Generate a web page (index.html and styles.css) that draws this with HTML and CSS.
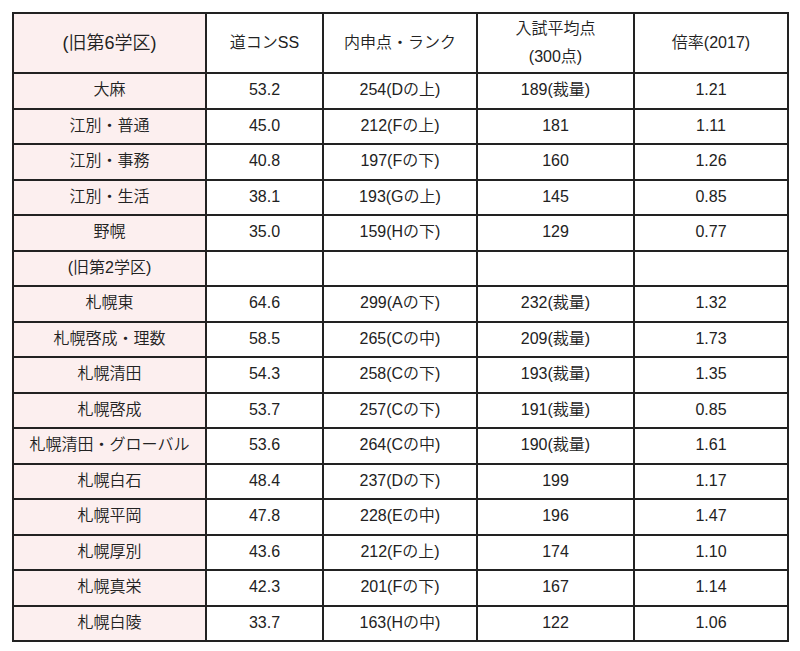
FILE: index.html
```html
<!DOCTYPE html>
<html lang="ja">
<head>
<meta charset="utf-8">
<link rel="stylesheet" href="styles.css">
</head>
<body>
<table class="score-table">
  <colgroup>
    <col class="c-name"><col class="c-ss"><col class="c-rank"><col class="c-avg"><col class="c-rate">
  </colgroup>
  <thead>
    <tr>
      <th class="name head-name">(旧第6学区)</th>
      <th>道コンSS</th>
      <th>内申点・ランク</th>
      <th class="two">入試平均点<br>(300点)</th>
      <th>倍率(2017)</th>
    </tr>
  </thead>
  <tbody>
    <tr><td class="name">大麻</td><td>53.2</td><td>254(Dの上)</td><td>189(裁量)</td><td>1.21</td></tr>
    <tr><td class="name">江別・普通</td><td>45.0</td><td>212(Fの上)</td><td>181</td><td>1.11</td></tr>
    <tr><td class="name">江別・事務</td><td>40.8</td><td>197(Fの下)</td><td>160</td><td>1.26</td></tr>
    <tr><td class="name">江別・生活</td><td>38.1</td><td>193(Gの上)</td><td>145</td><td>0.85</td></tr>
    <tr><td class="name">野幌</td><td>35.0</td><td>159(Hの下)</td><td>129</td><td>0.77</td></tr>
    <tr><td class="name">(旧第2学区)</td><td></td><td></td><td></td><td></td></tr>
    <tr><td class="name">札幌東</td><td>64.6</td><td>299(Aの下)</td><td>232(裁量)</td><td>1.32</td></tr>
    <tr><td class="name">札幌啓成・理数</td><td>58.5</td><td>265(Cの中)</td><td>209(裁量)</td><td>1.73</td></tr>
    <tr><td class="name">札幌清田</td><td>54.3</td><td>258(Cの下)</td><td>193(裁量)</td><td>1.35</td></tr>
    <tr><td class="name">札幌啓成</td><td>53.7</td><td>257(Cの下)</td><td>191(裁量)</td><td>0.85</td></tr>
    <tr><td class="name">札幌清田・グローバル</td><td>53.6</td><td>264(Cの中)</td><td>190(裁量)</td><td>1.61</td></tr>
    <tr><td class="name">札幌白石</td><td>48.4</td><td>237(Dの下)</td><td>199</td><td>1.17</td></tr>
    <tr><td class="name">札幌平岡</td><td>47.8</td><td>228(Eの中)</td><td>196</td><td>1.47</td></tr>
    <tr><td class="name">札幌厚別</td><td>43.6</td><td>212(Fの上)</td><td>174</td><td>1.10</td></tr>
    <tr><td class="name">札幌真栄</td><td>42.3</td><td>201(Fの下)</td><td>167</td><td>1.14</td></tr>
    <tr><td class="name">札幌白陵</td><td>33.7</td><td>163(Hの中)</td><td>122</td><td>1.06</td></tr>
  </tbody>
</table>
</body>
</html>
```

FILE: styles.css
```css
html, body {
  margin: 0;
  padding: 0;
  background: #ffffff;
}

body {
  padding: 12px;
  font-family: "Liberation Sans", Arial, "Noto Sans CJK JP", sans-serif;
  color: #222222;
}

.score-table {
  border-collapse: separate;
  border-spacing: 0;
  table-layout: fixed;
  width: 777px;
  border-left: 2px solid #222222;
  border-top: 2px solid #222222;
}

.c-name { width: 193px; }
.c-ss { width: 117px; }
.c-rank { width: 154px; }
.c-avg { width: 157px; }
.c-rate { width: 154px; }

.score-table th,
.score-table td {
  border-right: 2px solid #222222;
  border-bottom: 2px solid #222222;
  padding: 0 0 1px 0;
  text-align: center;
  vertical-align: middle;
  font-size: 16px;
  font-weight: 350;
  line-height: 20px;
  white-space: nowrap;
}

.score-table th {
  height: 57px;
}

.score-table td {
  height: 32.5px;
}

.score-table th.two {
  line-height: 28px;
}

.score-table .name {
  background: #fcefef;
}

.score-table .head-name {
  font-size: 18px;
}
```
